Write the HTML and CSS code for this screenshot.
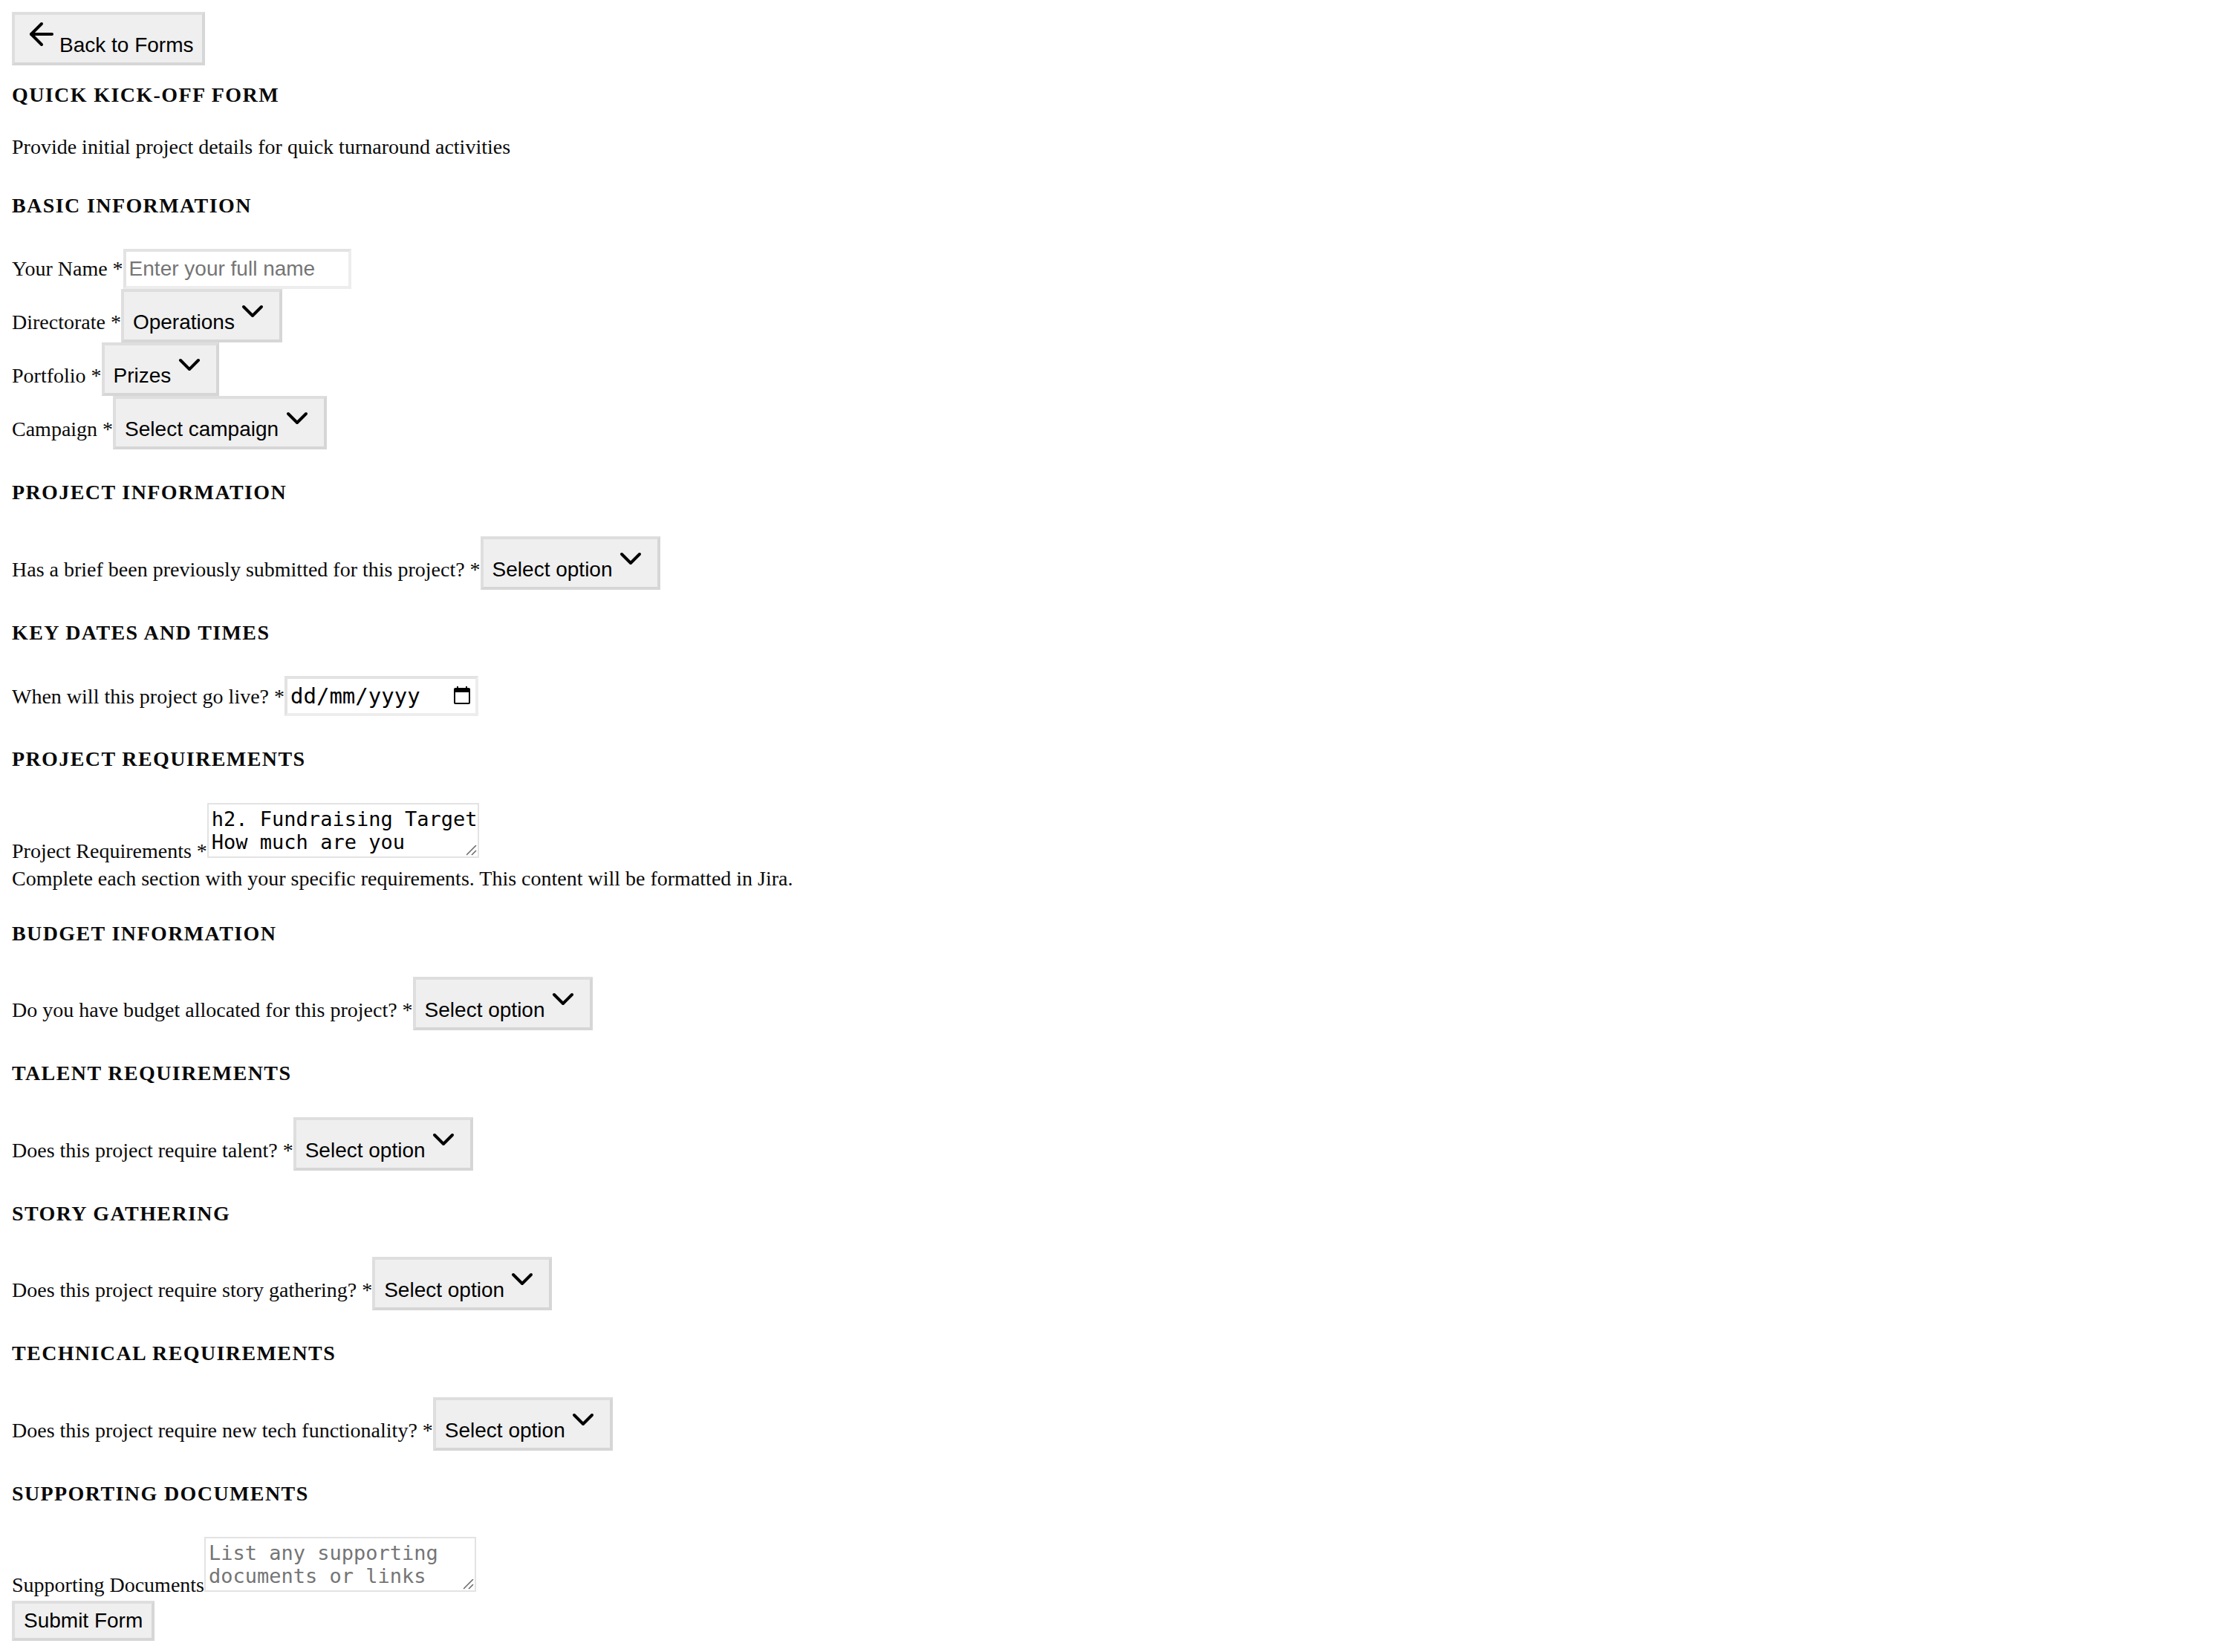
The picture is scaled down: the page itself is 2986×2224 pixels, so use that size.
FILE: index.html
```html
<!DOCTYPE html>
<html lang="en-GB">
<head>
<meta charset="utf-8">
<title>Quick Kick-Off Form</title>
<link rel="stylesheet" href="styles.css">
</head>
<body>
<svg width="0" height="0" class="sprite" aria-hidden="true">
  <symbol id="chevron" viewBox="0 0 24 24"><path d="m6 9 6 6 6-6"/></symbol>
</svg>
<header>
  <button type="button" class="button"><svg class="icon" viewBox="0 0 24 24" aria-hidden="true"><path d="m12 19-7-7 7-7"/><path d="M19 12H5"/></svg>Back to Forms</button>
  <h1 class="heading title">Quick Kick-Off Form</h1>
  <p class="intro">Provide initial project details for quick turnaround activities</p>
</header>
<form>
  <section>
    <h2 class="heading">Basic Information</h2>
    <div class="row"><label for="name">Your Name *</label><input class="input" id="name" type="text" placeholder="Enter your full name"></div>
    <div class="row"><label for="directorate">Directorate *</label><span class="select"><select id="directorate"><option>Operations</option></select><svg class="icon"><use href="#chevron"/></svg></span></div>
    <div class="row"><label for="portfolio">Portfolio *</label><span class="select"><select id="portfolio"><option>Prizes</option></select><svg class="icon"><use href="#chevron"/></svg></span></div>
    <div class="row"><label for="campaign">Campaign *</label><span class="select"><select id="campaign"><option>Select campaign</option></select><svg class="icon"><use href="#chevron"/></svg></span></div>
  </section>
  <section>
    <h2 class="heading">Project Information</h2>
    <div class="row"><label for="brief">Has a brief been previously submitted for this project? *</label><span class="select"><select id="brief"><option>Select option</option></select><svg class="icon"><use href="#chevron"/></svg></span></div>
  </section>
  <section>
    <h2 class="heading">Key Dates and Times</h2>
    <div class="row"><label for="live">When will this project go live? *</label><span class="date"><input class="input" id="live" type="text" inputmode="numeric" placeholder="dd/mm/yyyy"><svg class="calendar" viewBox="0 0 22 24" aria-hidden="true"><path d="M4 0h2v2h10V0h2v2h2a2 2 0 0 1 2 2v18a2 2 0 0 1-2 2H2a2 2 0 0 1-2-2V4a2 2 0 0 1 2-2h2zM2 8v14h18V8z" fill-rule="evenodd"/></svg></span></div>
  </section>
  <section>
    <h2 class="heading">Project Requirements</h2>
    <div class="row"><label for="requirements">Project Requirements *</label><textarea class="textarea" id="requirements" rows="2">h2. Fundraising Target
How much are you</textarea></div>
    <p class="help">Complete each section with your specific requirements. This content will be formatted in Jira.</p>
  </section>
  <section>
    <h2 class="heading">Budget Information</h2>
    <div class="row"><label for="budget">Do you have budget allocated for this project? *</label><span class="select"><select id="budget"><option>Select option</option></select><svg class="icon"><use href="#chevron"/></svg></span></div>
  </section>
  <section>
    <h2 class="heading">Talent Requirements</h2>
    <div class="row"><label for="talent">Does this project require talent? *</label><span class="select"><select id="talent"><option>Select option</option></select><svg class="icon"><use href="#chevron"/></svg></span></div>
  </section>
  <section>
    <h2 class="heading">Story Gathering</h2>
    <div class="row"><label for="story">Does this project require story gathering? *</label><span class="select"><select id="story"><option>Select option</option></select><svg class="icon"><use href="#chevron"/></svg></span></div>
  </section>
  <section>
    <h2 class="heading">Technical Requirements</h2>
    <div class="row"><label for="tech">Does this project require new tech functionality? *</label><span class="select"><select id="tech"><option>Select option</option></select><svg class="icon"><use href="#chevron"/></svg></span></div>
  </section>
  <section>
    <h2 class="heading">Supporting Documents</h2>
    <div class="row"><label for="documents">Supporting Documents</label><textarea class="textarea" id="documents" rows="2" placeholder="List any supporting documents or links"></textarea></div>
  </section>
  <button type="submit" class="button">Submit Form</button>
</form>
</body>
</html>
```
FILE: styles.css
```css
* {
  box-sizing: border-box;
}

body {
  margin: 16px 16px 0;
  background: #fff;
  color: #0a0a0a;
  font: 28px/42px "Liberation Serif", "Times New Roman", serif;
}

.sprite {
  position: absolute;
}

.heading {
  margin: 1.33em 0;
  font-size: 28px;
  font-weight: 700;
  letter-spacing: 0.05em;
  text-transform: uppercase;
}

.title {
  margin: 0.67em 0;
}

.intro {
  margin: 28px 0;
}

.help {
  margin: 0;
  line-height: 32px;
}

.button,
.select select {
  margin: 0;
  border: 4px solid;
  border-color: #dedede #d6d6d6 #d6d6d6 #dedede;
  border-radius: 0;
  background: #efefef;
  color: #000;
  font: 28px/42px "Liberation Sans", Arial, sans-serif;
}

.button {
  padding: 2px 12px;
}

.icon {
  width: 48px;
  height: 48px;
  fill: none;
  stroke: #000;
  stroke-width: 2;
  stroke-linecap: round;
  stroke-linejoin: round;
}

.select,
.date {
  display: inline-grid;
}

.select select {
  grid-area: 1 / 1;
  appearance: none;
  height: 72px;
  padding: 20px 60px 2px 12px;
}

.select .icon {
  grid-area: 1 / 1;
  justify-self: end;
  margin: 6px 16px 0 0;
  pointer-events: none;
}

.input {
  width: 307px;
  height: 54px;
  margin: 0;
  padding: 2px 4px;
  border: 4px solid;
  border-color: #e3e3e3 #ededed #ededed #e3e3e3;
  background: #fff;
  color: #000;
  font: 28px/42px "Liberation Sans", Arial, sans-serif;
}

.input::placeholder,
.textarea::placeholder {
  color: #757575;
}

.date .input {
  grid-area: 1 / 1;
  width: 261px;
  font-family: "DejaVu Sans Mono", monospace;
  font-size: 29px;
}

.date .input::placeholder {
  color: #000;
}

.calendar {
  grid-area: 1 / 1;
  justify-self: end;
  width: 22px;
  height: 24px;
  margin: 14px 11px 0 0;
}

.textarea {
  width: 366px;
  height: 74px;
  margin: 0;
  padding: 4px 0 4px 4px;
  border: 2px solid #e3e3e3;
  background: #fff;
  color: #000;
  font: 27px/31px "DejaVu Sans Mono", monospace;
  overflow: hidden;
}

.textarea::-webkit-resizer {
  background: url("data:image/svg+xml,%3Csvg xmlns='http://www.w3.org/2000/svg' width='15' height='15'%3E%3Cpath d='M0 13 13 0M7 13l6-6' stroke='%23666' stroke-width='1.5' fill='none'/%3E%3C/svg%3E") no-repeat;
}
```
